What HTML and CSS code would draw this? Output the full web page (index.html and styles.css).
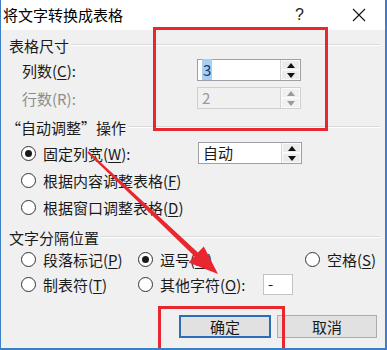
FILE: index.html
```html
<!DOCTYPE html>
<html lang="zh-CN">
<head>
<meta charset="utf-8">
<title>将文字转换成表格</title>
<link rel="stylesheet" href="styles.css">
</head>
<body>
<div class="dialog">
  <div class="titlebar">
    <span class="title">将文字转换成表格</span>
    <span class="help">?</span>
    <span class="close">
      <svg width="14" height="14" viewBox="0 0 14 14"><path d="M1 1 L13 13 M13 1 L1 13" stroke="#111" stroke-width="1.1" fill="none"/></svg>
    </span>
  </div>
  <div class="content">
    <div class="group-title g1"><span>表格尺寸</span></div>
    <div class="row r-cols">
      <span class="field-label">列数(<u>C</u>):</span>
      <div class="spin">
        <div class="spin-value"><span class="sel">3</span></div>
        <div class="spin-btns"><span class="up"></span><span class="down"></span></div>
      </div>
    </div>
    <div class="row r-rows disabled">
      <span class="field-label">行数(R):</span>
      <div class="spin">
        <div class="spin-value">2</div>
        <div class="spin-btns"><span class="up"></span><span class="down"></span></div>
      </div>
    </div>
    <div class="group-title g2"><span>“自动调整”操作</span></div>
    <div class="row r-fixed">
      <span class="radio-wrap fixed-label"><span class="radio checked"></span>固定列宽(<u>W</u>):</span>
      <div class="spin">
        <div class="spin-value">自动</div>
        <div class="spin-btns"><span class="up"></span><span class="down"></span></div>
      </div>
    </div>
    <div class="row r-opt"><span class="radio-wrap"><span class="radio"></span>根据内容调整表格(<u>F</u>)</span></div>
    <div class="row r-opt"><span class="radio-wrap"><span class="radio"></span>根据窗口调整表格(<u>D</u>)</span></div>
    <div class="group-title g3"><span>文字分隔位置</span></div>
    <div class="row sep-row r-sep1">
      <span class="radio-wrap c1"><span class="radio"></span>段落标记(<u>P</u>)</span>
      <span class="radio-wrap c2"><span class="radio checked"></span>逗号(<u>M</u>)</span>
      <span class="radio-wrap c3"><span class="radio"></span>空格(<u>S</u>)</span>
    </div>
    <div class="row sep-row r-sep2">
      <span class="radio-wrap c1"><span class="radio"></span>制表符(<u>T</u>)</span>
      <span class="radio-wrap c2b"><span class="radio"></span>其他字符(<u>O</u>):</span>
      <span class="char-box">-</span>
    </div>
    <div class="buttons">
      <button class="btn default">确定</button>
      <button class="btn">取消</button>
    </div>
  </div>
  <svg class="overlay" width="387" height="350" viewBox="0 0 387 350">
    <rect x="154.5" y="28.5" width="172" height="101" fill="none" stroke="#e8282e" stroke-width="3"/>
    <rect x="159.5" y="307.5" width="124" height="50" fill="none" stroke="#e8282e" stroke-width="3"/>
    <polygon points="88.7,151.3 197.9,252.6 203.8,246.4 218,274 188.6,262.4 194.5,256.2 87.3,152.7" fill="#e8282e"/>
  </svg>
</div>
</body>
</html>
```
FILE: styles.css
```css
* { box-sizing: border-box; }
html, body { margin: 0; padding: 0; }
body {
  width: 387px;
  height: 350px;
  overflow: hidden;
  font-family: "Noto Sans CJK SC", "Noto Sans", sans-serif;
  font-size: 15px;
  color: #1a1a1a;
}
.dialog {
  position: relative;
  width: 387px;
  height: 350px;
  background: #f0f0f0;
  border-left: 1px solid #3d7fc6;
  border-right: 2px solid #3d7fc6;
  border-bottom: 2px solid #3d7fc6;
  overflow: hidden;
}
.titlebar {
  height: 30px;
  background: #fff;
  display: flex;
  align-items: center;
  padding-left: 2px;
}
.title { font-size: 15px; line-height: 30px; color: #000; }
.help { margin-left: 172px; font-size: 16px; color: #222; font-family: "Liberation Sans", sans-serif; }
.close { margin-left: 48px; display: flex; align-items: center; }
.content { padding: 4px 0 0 8px; }
.group-title {
  height: 22px;
  display: flex;
  align-items: center;
  padding-right: 5px;
}
.group-title span { white-space: nowrap; margin-right: 2px; }
.group-title::after {
  content: "";
  flex: 1;
  border-top: 1px solid #dadada;
  border-bottom: 1px solid #fff;
}
.g2 span { margin-left: -3px; }
.g2 { margin-top: 7px; }
.g3 { margin-top: 8px; }
.row {
  height: 22px;
  display: flex;
  align-items: center;
  padding-left: 12px;
}
.r-cols { margin-top: 3px; padding-left: 13px; }
.r-rows { margin-top: 6px; padding-left: 13px; }
.r-fixed { margin-top: 4px; }
.r-opt { margin-top: 5px; }
.r-sep2 { margin-top: 3px; }
.field-label { width: 175px; }
.fixed-label { width: 177px; }
.disabled { color: #8d8d8d; }
u { text-decoration: underline; text-underline-offset: 2px; }
.spin {
  width: 104px;
  height: 22px;
  border: 1px solid #9ea0a5;
  background: #fff;
  display: flex;
}
.spin-value {
  flex: 1;
  line-height: 20px;
  padding-left: 4px;
  font-size: 15px;
}
.sel { background: #a8cdf2; color: #123a6a; padding: 0 1px; }
.spin-btns {
  width: 20px;
  display: flex;
  flex-direction: column;
  border-left: 1px solid #d4d4d4;
}
.spin-btns span {
  flex: 1;
  background: #ececec;
  border: 1px solid #fafafa;
  display: flex;
  align-items: center;
  justify-content: center;
}
.spin-btns span::before {
  content: "";
  border-left: 4px solid transparent;
  border-right: 4px solid transparent;
}
.spin-btns .up::before { border-bottom: 5px solid #111; }
.spin-btns .down::before { border-top: 5px solid #111; }
.disabled .spin { border-color: #cfcfcf; background: #f0f0f0; }
.disabled .spin-value { color: #9a9a9a; }
.disabled .spin-btns span { background: #f0f0f0; }
.disabled .up::before { border-bottom-color: #9a9a9a; }
.disabled .down::before { border-top-color: #9a9a9a; }
.radio-wrap { display: flex; align-items: center; white-space: nowrap; }
.radio {
  width: 15px;
  height: 15px;
  border: 1px solid #333;
  border-radius: 50%;
  background: #fff;
  margin-right: 7px;
  display: flex;
  align-items: center;
  justify-content: center;
}
.radio.checked::after {
  content: "";
  width: 7px;
  height: 7px;
  border-radius: 50%;
  background: #1a1a1a;
}
.sep-row .c1 { width: 117px; }
.sep-row .c2 { width: 167px; }
.sep-row .c2b { width: 125px; }
.char-box {
  width: 30px;
  height: 21px;
  background: #fff;
  border: 1px solid #c4c4c4;
  line-height: 18px;
  padding-left: 4px;
}
.buttons {
  margin-top: 20px;
  display: flex;
  padding-left: 170px;
  gap: 6px;
}
.btn {
  font-family: "Noto Sans CJK SC", sans-serif;
  font-size: 15px;
  height: 23px;
  padding: 0;
  background: #e1e1e1;
  border: 1px solid #adadad;
  color: #1a1a1a;
  width: 100px;
  line-height: 20px;
}
.btn.default { width: 92px; border: 2px solid #2b6eb7; }
.overlay { position: absolute; left: -1px; top: 0; pointer-events: none; }
```
